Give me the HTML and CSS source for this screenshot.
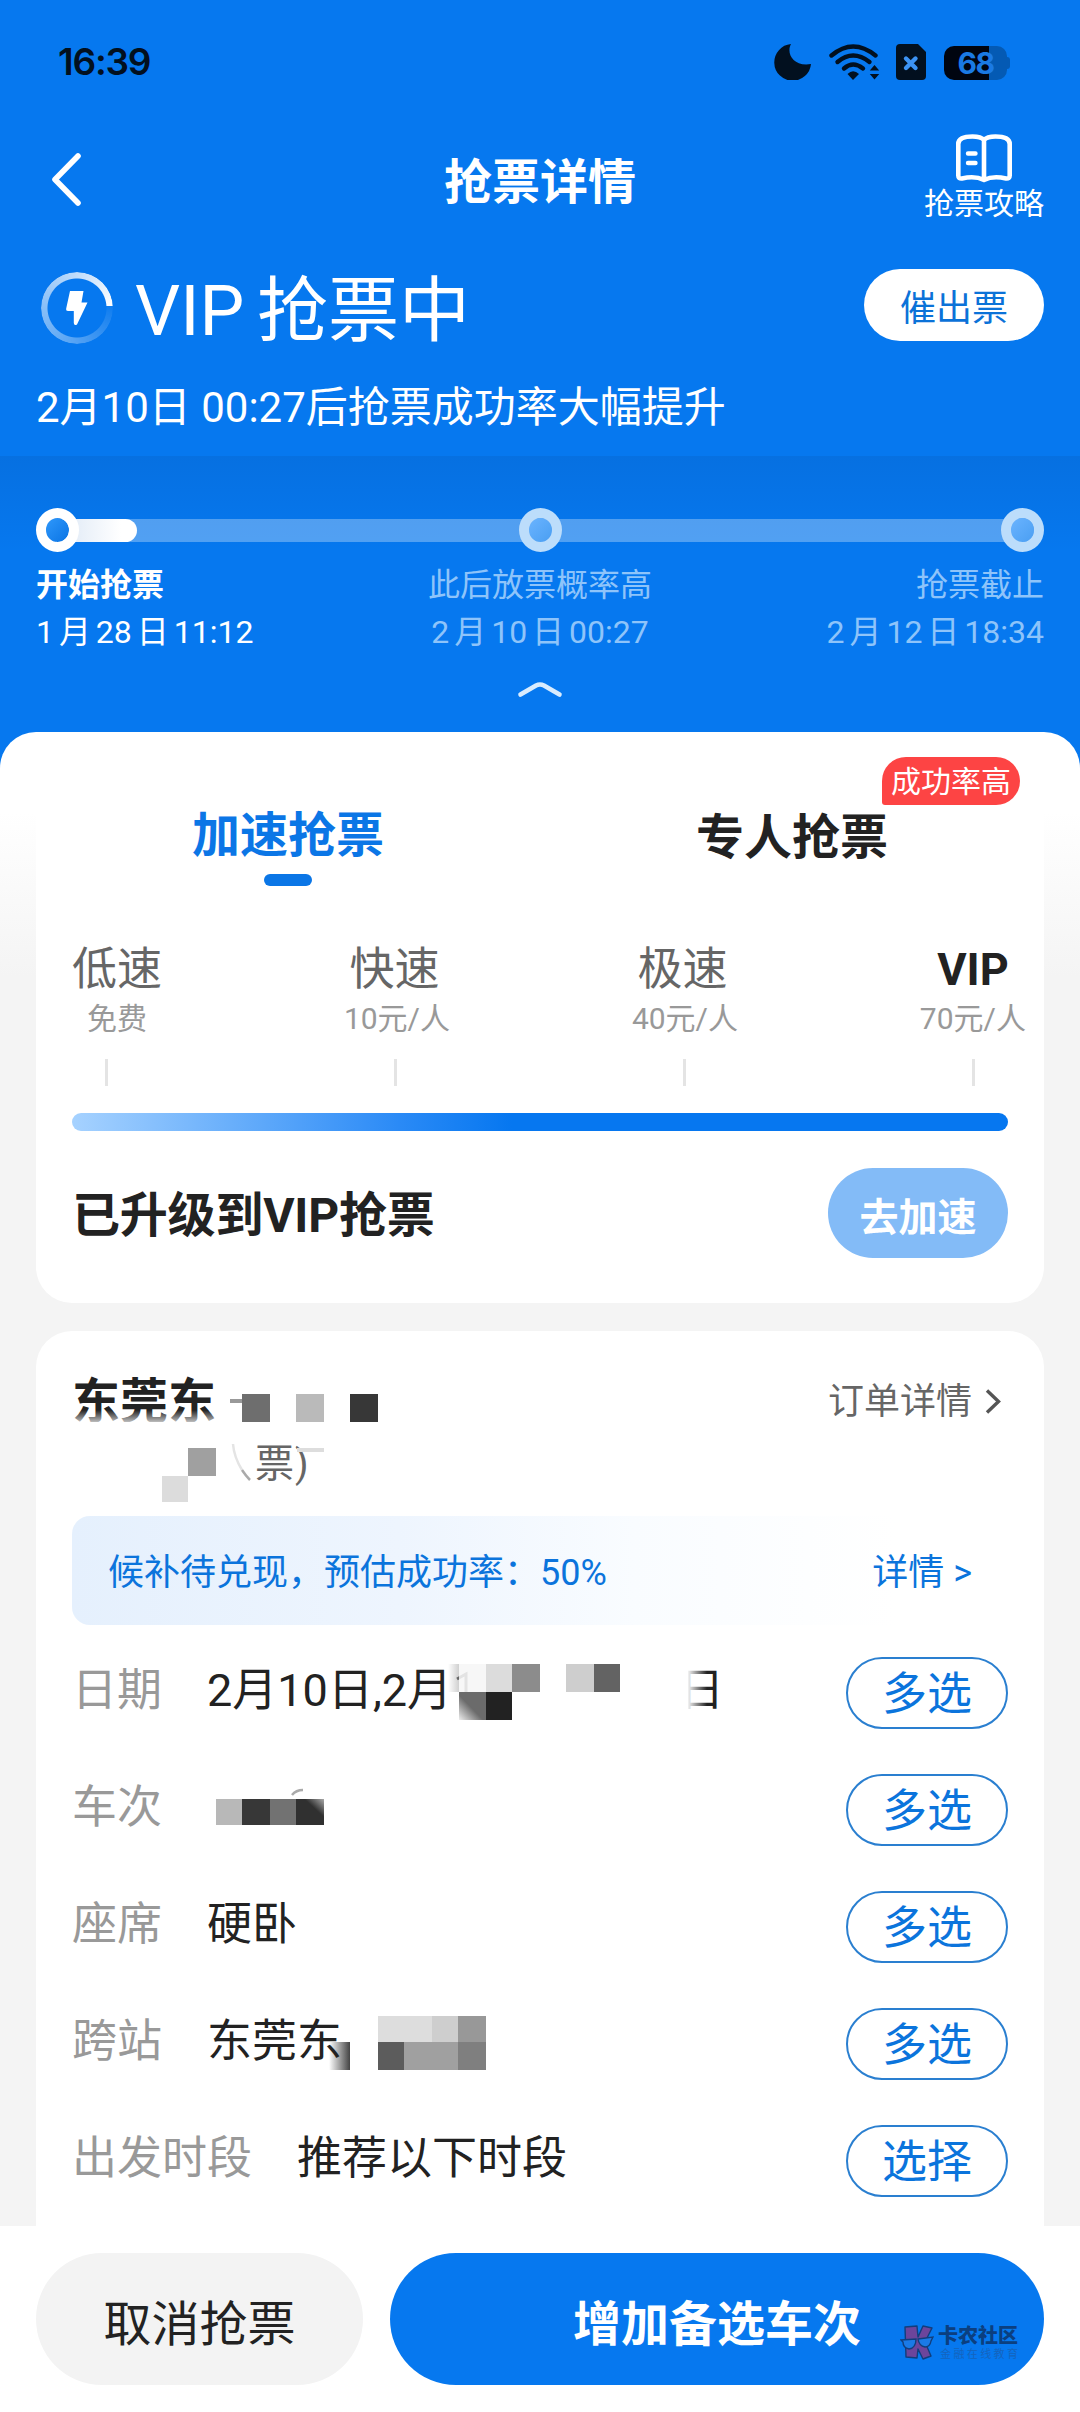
FILE: index.html
```html
<!DOCTYPE html>
<html lang="zh-CN">
<head>
<meta charset="utf-8">
<title>抢票详情</title>
<link rel="stylesheet" href="styles.css">
</head>
<body>
<div class="page">
  <header class="hero">
    <div class="status">
      <span class="clock">16:39</span>
      <div class="status-icons">
        <svg class="i-moon" width="37" height="36" viewBox="0 0 37 36"><path d="M17 0C12 9 19 23 37 20A18.4 18.4 0 1 1 17 0Z" fill="#02101f"/></svg>
        <svg class="i-wifi" width="51" height="36" viewBox="0 0 51 36"><g fill="none" stroke="#02101f" stroke-width="4.4" stroke-linecap="round"><path d="M2.5 11.500Q24 -6.500 46.500 11.500"/><path d="M8.500 18Q24 5 40.500 18"/><path d="M15 24.500Q24 16.500 34 24.500"/></g><path d="M24 36L18.500 30Q24 24.500 30 30Z" fill="#02101f"/><path d="M45.500 21l4.700 5.600h-9.400zM45.500 35.500l4.700-5.600h-9.400z" fill="#02101f"/></svg>
        <svg class="i-sim" width="30" height="36" viewBox="0 0 30 36"><path d="M4 0H22L30 8V32a4 4 0 0 1-4 4H4a4 4 0 0 1-4-4V4a4 4 0 0 1 4-4Z" fill="#02101f"/><path d="M10 14.500l9.500 9.500M19.500 14.500L10 24" stroke="#3c93f4" stroke-width="4.400" stroke-linecap="round"/></svg>
        <div class="battery"><span>68</span></div>
      </div>
    </div>
    <nav class="nav">
      <svg class="back" width="36" height="56" viewBox="0 0 36 56"><path d="M29 4L6 27.500L29 51" fill="none" stroke="#fff" stroke-width="5.600" stroke-linecap="round" stroke-linejoin="round"/></svg>
      <h1>抢票详情</h1>
      <a class="guide">
        <svg width="58" height="50" viewBox="0 0 58 50"><g fill="none" stroke="#fff" stroke-width="4.600" stroke-linecap="round" stroke-linejoin="round"><path d="M29 7Q26 3.500 17.500 3.500Q3.300 3.500 3.300 11V42.500Q3.300 46 7 45.500Q20 42.500 29 47Q38 42.500 51 45.500Q54.700 46 54.700 42.500V11Q54.700 3.500 40.500 3.500Q32 3.500 29 7V46"/><path d="M13 20.500h7.500M13 30h7.500" stroke-width="4.400"/></g></svg>
        <span>抢票攻略</span>
      </a>
    </nav>
    <div class="headline">
      <div class="ring">
        <svg width="24" height="36" viewBox="0 0 24 36"><path d="M5 1H18.500L16.500 12.500H22.500L12 34.500Q9 36 8.800 33V21H3Q.800 21 1.200 18.500Z" fill="#fff"/></svg>
      </div>
      <h2>VIP 抢票中</h2>
      <button class="urge">催出票</button>
    </div>
    <p class="tip">2月10日 00:27后抢票成功率大幅提升</p>
    <section class="timeline">
      <div class="track">
        <div class="track-fill"></div>
        <i class="dot on"></i><i class="dot"></i><i class="dot"></i>
      </div>
      <div class="stops">
        <div class="stop on"><b>开始抢票</b><span>1 月 28 日 11:12</span></div>
        <div class="stop mid"><b>此后放票概率高</b><span>2 月 10 日 00:27</span></div>
        <div class="stop end"><b>抢票截止</b><span>2 月 12 日 18:34</span></div>
      </div>
      <svg class="fold" width="48" height="20" viewBox="0 0 48 20"><path d="M4.500 15.500L20 6.500Q24 4.500 28 6.500L43.500 15.500" fill="none" stroke="#d9ecfe" stroke-width="4.600" stroke-linecap="round"/></svg>
    </section>
  </header>

  <main class="sheet">
    <section class="card speed">
      <div class="tabs">
        <div class="tab active">加速抢票</div>
        <div class="tab">专人抢票<em>成功率高</em></div>
      </div>
      <div class="levels">
        <div class="level"><b>低速</b><span>免费</span></div>
        <div class="level paid"><b>快速</b><span>10元/人</span></div>
        <div class="level paid"><b>极速</b><span>40元/人</span></div>
        <div class="level vip"><b>VIP</b><span>70元/人</span></div>
      </div>
      <div class="ticks"><i></i><i></i><i></i><i></i></div>
      <div class="bar"></div>
      <div class="upgrade">
        <strong>已升级到VIP抢票</strong>
        <button>去加速</button>
      </div>
    </section>

    <section class="card order">
      <div class="order-head">
        <h3>东莞东</h3>
        <a>订单详情<svg width="20" height="30" viewBox="0 0 20 30"><path d="M4 4.500L15.500 15.500L4 26.500" fill="none" stroke="#555" stroke-width="3.400"/></svg></a>
      </div>
      <div class="order-sub">票)</div>
      <div class="notice"><span>候补待兑现，预估成功率：50%</span><span>详情 &gt;</span></div>
      <div class="row"><label>日期</label><span class="val">2月10日,2月</span><span class="tail">日</span><button>多选</button></div>
      <div class="row"><label>车次</label><span class="val"></span><button>多选</button></div>
      <div class="row"><label>座席</label><span class="val">硬卧</span><button>多选</button></div>
      <div class="row"><label>跨站</label><span class="val">东莞东</span><button>多选</button></div>
      <div class="row"><label>出发时段</label><span class="val">推荐以下时段</span><button>选择</button></div>

      <!-- privacy mosaic laid over the itinerary -->
      <svg class="mosaic" width="1008" height="895" viewBox="36 1331 1008 895">
        <defs>
          <linearGradient id="up" x1="0" y1="0" x2="0" y2="1"><stop offset="0" stop-color="#fff" stop-opacity="0"/><stop offset="1" stop-color="#fff" stop-opacity=".7"/></linearGradient>
          <linearGradient id="dk" x1="0" y1="0" x2="1" y2="0"><stop offset="0" stop-color="#222" stop-opacity="0"/><stop offset="1" stop-color="#222" stop-opacity=".85"/></linearGradient>
          <linearGradient id="dg" x1="1" y1="0" x2="0" y2="1"><stop offset="0" stop-color="#6b6b6b"/><stop offset=".55" stop-color="#6b6b6b"/><stop offset="1" stop-color="#eee"/></linearGradient>
          <linearGradient id="tr" x1="1" y1="0" x2="0" y2="1"><stop offset="0" stop-color="#aaa"/><stop offset=".35" stop-color="#303030"/></linearGradient>
          <linearGradient id="lf" x1="0" y1="0" x2="1" y2="0"><stop offset="0" stop-color="#fff"/><stop offset="1" stop-color="#fff" stop-opacity="0"/></linearGradient>
        </defs>
        <rect x="72" y="1410" width="146" height="12" fill="url(#up)"/>
        <rect x="72" y="1422" width="146" height="6" fill="#fff"/>
        <rect x="230" y="1399" width="12" height="4" fill="#999"/>
        <g>
          <rect x="242" y="1394" width="28" height="28" fill="#6e6e6e"/>
          <rect x="296" y="1394" width="28" height="28" fill="#bababa"/>
          <rect x="350" y="1394" width="28" height="28" fill="#373737"/>
          <rect x="188" y="1448" width="28" height="28" fill="#a0a0a0"/>
          <rect x="162" y="1476" width="26" height="26" fill="#dcdcdc"/>
          <rect x="297" y="1448" width="27" height="4" fill="#ddd"/>
        </g>
        <path d="M233 1444Q234 1457 242 1470" fill="none" stroke="#e4e4e4" stroke-width="2.500"/>
        <path d="M242 1470Q246 1476 250 1480" fill="none" stroke="#aaa" stroke-width="2.500"/>
        <g>
          <path d="M457 1679l9-5v29" fill="none" stroke="#777" stroke-width="3"/>
          <rect x="448" y="1664" width="11" height="28" fill="url(#dk)" opacity=".25"/>
          <rect x="459" y="1664" width="27" height="28" fill="#f6f6f6" opacity=".85"/>
          <rect x="486" y="1664" width="26" height="28" fill="#dcdcdc"/>
          <rect x="512" y="1664" width="28" height="28" fill="#8c8c8c"/>
          <rect x="459" y="1692" width="27" height="28" fill="url(#dg)"/>
          <rect x="486" y="1692" width="26" height="28" fill="#222"/>
          <rect x="566" y="1664" width="28" height="28" fill="#cecece"/>
          <rect x="594" y="1664" width="26" height="28" fill="#636363"/>
          <rect x="680" y="1664" width="8" height="50" fill="#fff"/>
          <rect x="687" y="1664" width="20" height="50" fill="url(#lf)"/>
        </g>
        <path d="M292 1795Q296 1790 303 1790" fill="none" stroke="#aaa" stroke-width="2.500"/>
        <g>
          <rect x="216" y="1799" width="26" height="26" fill="#b8b8b8"/>
          <rect x="242" y="1799" width="28" height="26" fill="#373737"/>
          <rect x="270" y="1799" width="26" height="26" fill="#727272"/>
          <rect x="296" y="1799" width="28" height="26" fill="url(#tr)"/>
        </g>
        <g>
          <rect x="329" y="2042" width="21" height="28" fill="url(#dk)"/>
          <rect x="378" y="2016" width="54" height="26" fill="#ddd"/>
          <rect x="432" y="2016" width="26" height="26" fill="#cecece"/>
          <rect x="458" y="2016" width="28" height="26" fill="#989898"/>
          <rect x="378" y="2042" width="26" height="28" fill="#5c5c5c"/>
          <rect x="404" y="2042" width="54" height="28" fill="#a0a0a0"/>
          <rect x="458" y="2042" width="28" height="28" fill="#7f7f7f"/>
        </g>
      </svg>
    </section>
  </main>

  <footer class="actions">
    <button class="cancel">取消抢票</button>
    <button class="primary">增加备选车次</button>
    <div class="brand">
      <svg width="34" height="36" viewBox="0 0 34 36"><g fill="#6c459b" stroke="#113e7c" stroke-width="1.400" stroke-linejoin="round"><path d="M5 2L17 1L18 12L23 1L32 3L25 17L31 31L23 34L18 24L17 33L6 32Z"/></g><g fill="#1a7ae6" stroke="#113e7c" stroke-width="1.400"><path d="M1 15L16 14Q16 23 9 24Q3 23 3 17Z"/><path d="M18 14L33 12L31 16Q30 22 25 22Q19 21 18 14Z"/></g></svg>
      <div><b>卡农社区</b><span>金融在线教育</span></div>
    </div>
  </footer>
</div>
</body>
</html>
```
FILE: styles.css
```css
* { box-sizing: border-box; }

body {
  margin: 0;
  background: #f4f4f4;
  font-family: Roboto, "Noto Sans CJK SC", sans-serif;
  color: #222;
}

h1, h2, h3, p { margin: 0; }
em, i { font-style: normal; }
button { border: 0; padding: 0; font: inherit; white-space: nowrap; }
svg { display: block; flex: none; }

.page {
  display: flex;
  flex-direction: column;
  width: 1080px;
  height: 2412px;
  overflow: hidden;
}

/* blue header */
.hero {
  flex: none;
  height: 768px;
  background: #0678ef;
  color: #fff;
}

.status {
  display: flex;
  justify-content: space-between;
  align-items: center;
  height: 124px;
  padding: 0 70px 0 58px;
}
.clock {
  font: 600 37px/40px Inter, sans-serif;
  letter-spacing: -1.2px;
  color: #02101f;
}
.status-icons { display: flex; align-items: center; }
.i-wifi { margin-left: 18px; }
.i-sim { margin-left: 16px; }
.battery {
  position: relative;
  width: 63px;
  height: 34px;
  margin: 1px 3px 0 18px;
  border-radius: 10px;
  background: linear-gradient(90deg, #000510 45px, #045ab4 45px);
  font: 700 30px/35px Inter, sans-serif;
  letter-spacing: -1.500px;
  color: #1a7ae4;
  text-align: center;
}
.battery::after {
  content: "";
  position: absolute;
  right: -3px;
  top: 11px;
  width: 3px;
  height: 12px;
  border-radius: 0 3px 3px 0;
  background: #045ab4;
}

.nav {
  display: grid;
  grid-template-columns: 1fr auto 1fr;
  align-items: center;
  height: 116px;
  padding: 0 36px 0 49px;
}
.back { margin-top: -5px; }
.nav h1 {
  font-size: 48px;
  line-height: 60px;
  font-weight: 700;
  margin: 1px 0 0 -13px;
}
.guide {
  justify-self: end;
  display: flex;
  flex-direction: column;
  align-items: center;
  font-size: 30px;
  line-height: 40px;
  margin-top: -8px;
}
.guide svg { margin-bottom: 1px; }

.headline {
  display: flex;
  align-items: center;
  height: 134px;
  padding: 2px 36px 0 41px;
}
.ring {
  position: relative;
  display: grid;
  place-items: center;
  width: 72px;
  height: 72px;
}
.ring::before {
  content: "";
  position: absolute;
  inset: 0;
  border-radius: 50%;
  background: conic-gradient(from 86deg, rgba(255,255,255,.04), rgba(255,255,255,.35) 30%, rgba(255,255,255,.6) 60%, rgba(255,255,255,.8) 82%, #fff);
  -webkit-mask: radial-gradient(circle, transparent 29px, #000 30px);
  mask: radial-gradient(circle, transparent 29px, #000 30px);
}
.headline h2 {
  flex: 1;
  margin: 5px 0 0 22px;
  font-size: 71px;
  line-height: 90px;
  font-weight: 400;
  word-spacing: -5px;
}
.urge {
  width: 180px;
  height: 72px;
  margin-top: -6px;
  border-radius: 36px;
  background: #fff;
  color: #0b72d8;
  font-size: 36px;
}

.tip {
  height: 82px;
  padding: 6px 0 0 36px;
  font-size: 42px;
  line-height: 56px;
}

.timeline {
  display: flex;
  flex-direction: column;
  padding: 52px 36px 0;
  background: linear-gradient(rgba(0,20,60,.08), rgba(0,20,60,0) 96px);
}
.track {
  position: relative;
  display: flex;
  justify-content: space-between;
  height: 44px;
  background: linear-gradient(rgba(255,255,255,.3), rgba(255,255,255,.3)) center / 966px 23px no-repeat;
}
.track-fill {
  position: absolute;
  left: 20px;
  top: 11px;
  width: 81px;
  height: 23px;
  border-radius: 0 12px 12px 0;
  background: linear-gradient(90deg, #e6eef8 25%, #fff 80%);
}
.dot {
  position: relative;
  width: 43px;
  height: 44px;
  border: 10px solid #bcddfb;
  border-radius: 50%;
  background: linear-gradient(135deg, #6ab4ff, #4a9ef2) padding-box;
}
.dot.on {
  border-color: #fff;
  background: linear-gradient(135deg, #2f98fb, #0a74e4) padding-box;
}
.stops {
  display: grid;
  grid-template-columns: 1fr 1fr 1fr;
  margin-top: 10px;
}
.stop {
  display: flex;
  flex-direction: column;
  font-size: 32px;
  line-height: 47px;
  white-space: nowrap;
  color: #8ec4fa;
}
.stop b { font-weight: 400; }
.stop span { word-spacing: -3px; }
.stop.on { color: #fff; }
.stop.on b { font-weight: 700; }
.mid { align-items: center; }
.end { align-items: flex-end; }
.fold { align-self: center; margin-top: 23px; }

/* scrolling sheet */
.sheet {
  flex: 1;
  min-height: 0;
  margin-top: -36px;
  overflow: hidden;
  border-radius: 36px 36px 0 0;
  background: linear-gradient(#fff 80px, #f4f4f4 245px);
  padding: 0 36px;
  display: flex;
  flex-direction: column;
  gap: 28px;
}
.card {
  flex: none;
  background: #fff;
  padding: 0 36px;
}
.speed {
  height: 571px;
  border-radius: 0 0 36px 36px;
}
.tabs {
  display: grid;
  grid-template-columns: 1fr 1fr;
  margin: 0 -36px;
  padding-top: 72px;
  height: 154px;
}
.tab {
  position: relative;
  text-align: center;
  font-size: 48px;
  line-height: 64px;
  font-weight: 700;
  padding-top: 2px;
}
.tab.active { color: #0b76e6; padding-top: 0; }
.tab.active::after {
  content: "";
  display: block;
  width: 48px;
  height: 12px;
  margin: 6px auto 0;
  border-radius: 6px;
  background: #0b76e6;
}
.tab em {
  position: absolute;
  left: 342px;
  top: -47px;
  width: 138px;
  height: 48px;
  border-radius: 24px 24px 24px 3px;
  background: #fd4444;
  color: #fff;
  font-size: 30px;
  line-height: 50px;
  font-weight: 400;
}
.levels {
  display: flex;
  justify-content: space-between;
  margin: 54px -18px 0 0;
}
.level {
  display: flex;
  flex-direction: column;
  align-items: center;
  color: #999;
}
.level b {
  font-size: 45px;
  line-height: 59px;
  font-weight: 400;
  color: #666;
}
.level.paid b { margin-right: 5px; }
.level.vip b { font-weight: 700; color: #222; }
.level span { font-size: 30px; line-height: 40px; }
.ticks {
  display: flex;
  justify-content: space-between;
  width: 870px;
  margin: 20px 0 0 33px;
}
.ticks i { width: 3px; height: 27px; background: #e4e4e4; }
.bar {
  height: 18px;
  margin-top: 27px;
  border-radius: 9px;
  background: linear-gradient(90deg, #a6d2ff, #69affb 17%, #2a8af6 35%, #0677f0 47%);
}
.upgrade {
  display: flex;
  justify-content: space-between;
  align-items: center;
  height: 90px;
  margin-top: 37px;
}
.upgrade strong { font-size: 48px; line-height: 60px; margin-top: 6px; letter-spacing: -.2px; }
.upgrade button {
  width: 180px;
  height: 90px;
  border-radius: 45px;
  background: #83bbf7;
  color: #fff;
  font-size: 39px;
  font-weight: 700;
  padding-top: 1px;
}

/* order card */
.order {
  position: relative;
  height: 930px;
  border-radius: 36px;
  padding-top: 41px;
}
.order-head {
  display: flex;
  justify-content: space-between;
  align-items: center;
  height: 60px;
}
.order-head h3 { font-size: 48px; line-height: 60px; font-weight: 700; }
.order-head a {
  display: flex;
  align-items: center;
  gap: 11px;
  margin-right: 5px;
  font-size: 36px;
  line-height: 48px;
  color: #666;
}
.order-head svg { margin-top: -2px; }
.order-sub {
  height: 84px;
  padding: 7px 0 0 183px;
  font-size: 39px;
  line-height: 50px;
  letter-spacing: 1px;
  color: #666;
}
.notice {
  display: flex;
  justify-content: space-between;
  align-items: center;
  height: 109px;
  padding: 5px 36px 0;
  border-radius: 18px;
  background: linear-gradient(90deg, #e5f0fd, #eef5fe 35%, #f9fcff 60%, #fff 88%);
  color: #0b74dc;
  font-size: 36px;
  line-height: 48px;
}
.row {
  display: flex;
  align-items: center;
  height: 72px;
  margin-bottom: 45px;
  font-size: 45px;
  line-height: 60px;
}
.notice + .row { margin-top: 32px; }
.row label { color: #999; margin: -4px 45px 0 0; }
.val { margin-top: -4px; }
.tail { margin: -4px 0 0 227px; }
.row button {
  width: 162px;
  height: 72px;
  margin-left: auto;
  padding-top: 3px;
  border: 2px solid #2a7fd0;
  border-radius: 36px;
  background: #fff;
  color: #0b74dc;
}
.mosaic { position: absolute; left: 0; top: 0; }

/* bottom actions */
.actions {
  position: relative;
  flex: none;
  display: flex;
  gap: 27px;
  height: 186px;
  padding: 27px 36px;
  background: #fff;
}
.actions button {
  height: 132px;
  border-radius: 66px;
  font-size: 48px;
  padding-top: 1px;
}
.cancel { width: 327px; background: #f3f3f3; color: #222; }
.primary { flex: 1; background: #0678ef; color: #fff; font-weight: 700; }
.brand {
  position: absolute;
  left: 900px;
  top: 99px;
  display: flex;
  gap: 4px;
}
.brand div { display: flex; flex-direction: column; }
.brand b { font-size: 20px; line-height: 22px; color: #0b3f80; font-weight: 900; }
.brand span {
  font-size: 11px;
  line-height: 16px;
  letter-spacing: 2.400px;
  padding-left: 2px;
  color: #1564bd;
}
```
